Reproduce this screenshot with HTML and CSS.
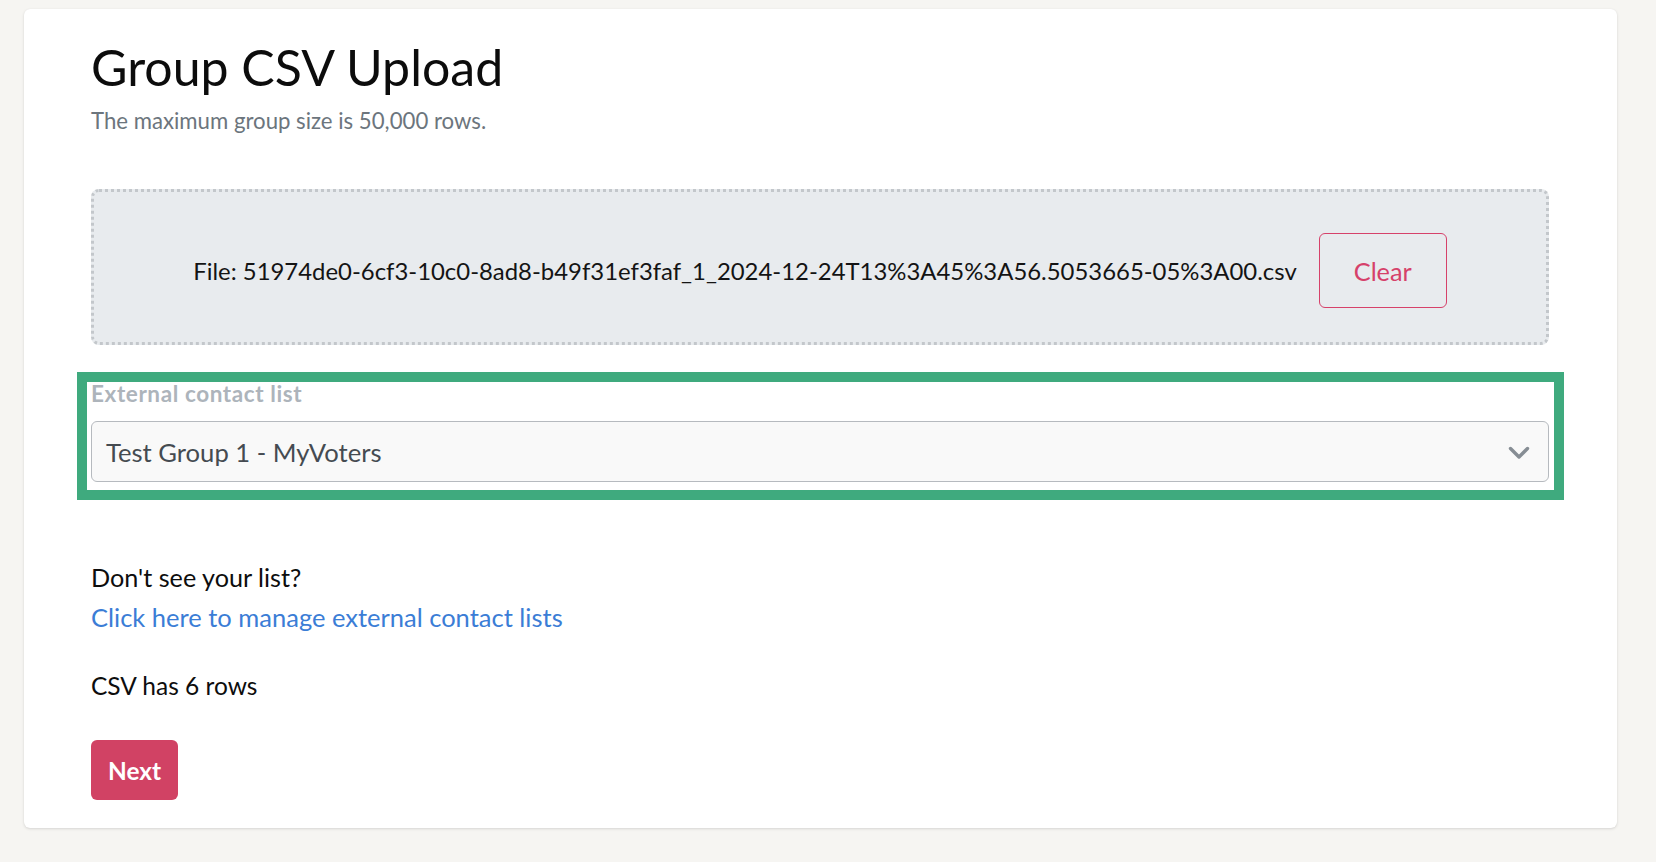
FILE: index.html
```html
<!DOCTYPE html>
<html lang="en">
<head>
<meta charset="utf-8">
<title>Group CSV Upload</title>
<link rel="stylesheet" href="styles.css">
</head>
<body>
<div class="page">
  <main class="card">
    <h1 class="title">Group CSV Upload</h1>
    <p class="subtitle">The maximum group size is 50,000 rows.</p>

    <div class="dropzone">
      <span class="file-name">File: 51974de0-6cf3-10c0-8ad8-b49f31ef3faf_1_2024-12-24T13%3A45%3A56.5053665-05%3A00.csv</span>
      <button class="btn-clear" type="button">Clear</button>
    </div>

    <div class="highlight">
      <label class="field-label" for="list">External contact list</label>
      <div class="select" id="list">
        <span class="select-value">Test Group 1 - MyVoters</span>
        <svg class="chevron" width="22" height="14" viewBox="0 0 22 14" aria-hidden="true">
          <polyline points="2.5,2.5 11,11 19.5,2.5" fill="none" stroke="#868d94" stroke-width="3.4" stroke-linecap="round" stroke-linejoin="round"/>
        </svg>
      </div>
    </div>

    <p class="hint">Don't see your list?</p>
    <a class="manage-link" href="#">Click here to manage external contact lists</a>

    <p class="row-count">CSV has 6 rows</p>

    <button class="btn-next" type="button">Next</button>
  </main>
</div>
</body>
</html>
```
FILE: styles.css
```css
html, body {
  margin: 0;
  padding: 0;
  background: #f6f5f2;
}

body {
  font-family: "Lato", "Source Sans Pro", "Liberation Sans", sans-serif;
  color: #111;
}

.page {
  padding: 9px 39px 35px 24px;
}

.card {
  display: flex;
  flex-direction: column;
  align-items: flex-start;
  background: #ffffff;
  border-radius: 6px;
  box-shadow: 0 1px 3px rgba(0, 0, 0, 0.13), 0 0 1px rgba(0, 0, 0, 0.06);
  padding: 29px 68px 28px 67px;
}

.title {
  margin: 0;
  font-size: 50px;
  line-height: 59px;
  font-weight: 400;
  color: #0c0c0c;
}

.subtitle {
  margin: 11px 0 0;
  font-size: 22.2px;
  line-height: 26px;
  color: #6c757d;
}

.dropzone {
  align-self: stretch;
  margin-top: 55px;
  height: 156px;
  box-sizing: border-box;
  padding: 42px 0 35px;
  display: flex;
  justify-content: center;
  align-items: flex-start;
  background: #e8ebee;
  border: 3px dotted #c3c7cb;
  border-radius: 8px;
}

.file-name {
  margin-top: -1px;
  font-size: 23.9px;
  line-height: 75px;
  color: #141414;
  white-space: nowrap;
}

.btn-clear {
  margin-left: 22px;
  margin-top: -1px;
  width: 128px;
  height: 75px;
  box-sizing: border-box;
  background: transparent;
  border: 1px solid #d6416a;
  border-radius: 6px;
  color: #d6416a;
  font-family: inherit;
  font-size: 25.3px;
  padding: 0;
}

.highlight {
  align-self: stretch;
  margin: 27px -15px 0 -14px;
  padding: 0 5px 8px 4px;
  border: 10px solid #3faa7e;
  background: #fff;
  display: flex;
  flex-direction: column;
}

.field-label {
  font-size: 22.5px;
  line-height: 24px;
  font-weight: 700;
  letter-spacing: 0.6px;
  color: #adb4bb;
}

.select {
  margin-top: 15px;
  height: 61px;
  box-sizing: border-box;
  display: flex;
  align-items: center;
  justify-content: space-between;
  padding: 0 18px 0 14px;
  background: #f9f9f9;
  border: 1px solid #b6babf;
  border-radius: 6px;
}

.select-value {
  font-size: 25.6px;
  line-height: 30px;
  color: #454b51;
}

.chevron {
  display: block;
  flex: none;
  margin-top: 2px;
}

.hint {
  margin: 57px 0 0;
  font-size: 25.2px;
  line-height: 40px;
  color: #0d0d0d;
}

.manage-link {
  font-size: 25.5px;
  line-height: 40px;
  color: #3b7dd6;
  text-decoration: none;
}

.row-count {
  margin: 29px 0 0;
  font-size: 24.5px;
  line-height: 40px;
  color: #0d0d0d;
}

.btn-next {
  margin-top: 34px;
  width: 87px;
  height: 60px;
  box-sizing: border-box;
  padding: 0;
  border: none;
  border-radius: 6px;
  background: #d14264;
  color: #ffffff;
  font-family: inherit;
  font-size: 24.4px;
  font-weight: 700;
}
```
